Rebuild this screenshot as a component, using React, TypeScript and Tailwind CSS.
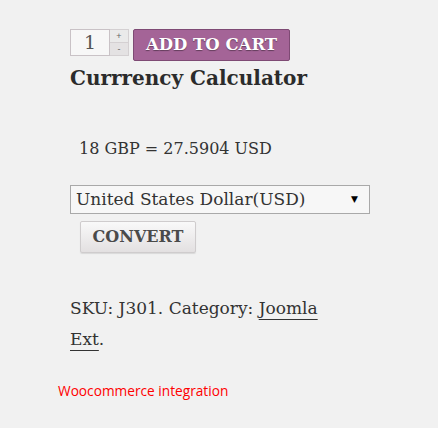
import React, { useState } from 'react';

const serif = "font-['DejaVu_Serif','Liberation_Serif',serif]";

const App: React.FC = () => {
  const [qty, setQty] = useState(1);
  const [currency, setCurrency] = useState('USD');

  return (
    <div className="w-[438px] h-[428px] bg-[#f1f1f1] overflow-hidden">
      <div className={`pl-[70px] pt-[29px] text-[#333] ${serif}`}>
        {/* quantity + add to cart */}
        <div className="flex items-start gap-[4px]">
          <div className="flex">
            <div className="w-[40px] h-[27px] bg-[#f7f7f7] border border-[#c9c2c6] flex items-center justify-center text-[19px] text-[#555]">
              {qty}
            </div>
            <div className="flex flex-col w-[19px] h-[27px]">
              <button
                onClick={() => setQty(qty + 1)}
                className="h-[14px] bg-[#eaeaea] border border-[#d4d0d2] border-l-0 text-[9px] leading-none text-[#666] font-['Liberation_Sans',sans-serif]"
              >
                +
              </button>
              <button
                onClick={() => setQty(Math.max(1, qty - 1))}
                className="h-[13px] bg-[#e4e2e3] border border-t-0 border-l-0 border-[#d4d0d2] text-[9px] leading-none text-[#666] font-['Liberation_Sans',sans-serif]"
              >
                -
              </button>
            </div>
          </div>
          <button className="w-[157px] h-[32px] bg-[#a46497] border border-[#7e4a74] rounded-[2px] text-white font-bold text-[16.5px] [text-shadow:0_1px_1px_rgba(0,0,0,0.4)]">
            ADD TO CART
          </button>
        </div>

        <h2 className="mt-[3px] text-[20px] font-bold leading-[28px] text-[#2b2b2b]">Currrency Calculator</h2>

        <p className="mt-[47px] pl-[9px] text-[16px] leading-[20px]">18 GBP = 27.5904 USD</p>

        <div className="mt-[26px] relative w-[300px] h-[29px] bg-[#f7f7f7] border border-[#a9a9a9]">
          <select
            value={currency}
            onChange={(e) => setCurrency(e.target.value)}
            className="appearance-none w-full h-full bg-transparent pl-[5px] text-[17px] text-[#333] outline-none"
          >
            <option value="USD">United States Dollar(USD)</option>
            <option value="EUR">Euro(EUR)</option>
            <option value="GBP">British Pound(GBP)</option>
          </select>
          <span className="absolute right-[11px] top-[9px] text-[9px] leading-none text-black pointer-events-none">▼</span>
        </div>

        <button className="mt-[7px] ml-[10px] w-[116px] h-[32px] bg-gradient-to-b from-[#f9f9f9] to-[#e3e0e1] border border-[#cfcccd] rounded-[2px] text-[16px] font-bold text-[#4a4a4a] shadow-[0_1px_1px_rgba(0,0,0,0.1)]">
          CONVERT
        </button>

        <p className="mt-[40px] text-[17px] leading-[31px]">
          SKU: J301. Category:{' '}
          <a href="#" className="text-[#333] underline decoration-1 underline-offset-[5px]">Joomla</a>
          <br />
          <a href="#" className="text-[#333] underline decoration-1 underline-offset-[5px]">Ext</a>.
        </p>
      </div>

      <div className="mt-[26px] pl-[58px] text-[13.7px] text-[#ff0000] font-['Open_Sans',sans-serif]">
        Woocommerce integration
      </div>
    </div>
  );
};

export default App;
